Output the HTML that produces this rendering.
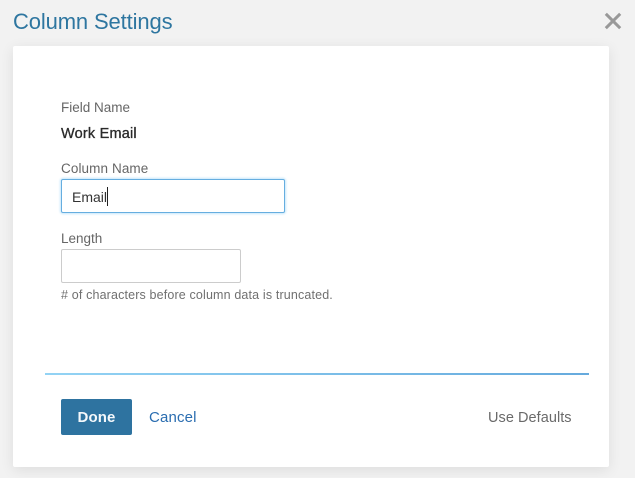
<!DOCTYPE html>
<html>
<head>
<meta charset="utf-8">
<style>
html,body{margin:0;padding:0;}
body{width:635px;height:478px;position:relative;overflow:hidden;background:#f2f2f2;font-family:"Liberation Sans",sans-serif;}
.t{position:absolute;white-space:nowrap;line-height:20px;}
.card{position:absolute;left:13px;top:46px;width:596px;height:421px;background:#fff;border-radius:2px;box-shadow:0 3px 14px rgba(0,0,0,.09);}
.inp{position:absolute;box-sizing:border-box;background:#fff;border-radius:2px;}
</style>
</head>
<body>
<div class="t" style="left:13px;top:12px;font-size:22px;color:#2e76a0;letter-spacing:-.13px;">Column Settings</div>
<svg style="position:absolute;left:604px;top:12px" width="18" height="18" viewBox="0 0 18 18"><path d="M1.8 1.8L16.2 16.2M16.2 1.8L1.8 16.2" stroke="#999" stroke-width="3" fill="none"/></svg>
<div class="card"></div>
<div class="t" style="left:61px;top:98px;font-size:13.5px;color:#666;">Field Name</div>
<div class="t" style="left:61px;top:124px;font-size:14.5px;color:#2a2a2a;letter-spacing:.2px;-webkit-text-stroke:.3px #2a2a2a;">Work Email</div>
<div class="t" style="left:61px;top:159px;font-size:13.5px;color:#666;letter-spacing:.1px;">Column Name</div>
<div class="inp" style="left:61px;top:179px;width:224px;height:34px;border:1px solid #66aee0;box-shadow:0 0 2px 1px #c4e6fa;"></div>
<div class="t" style="left:72px;top:187px;font-size:14px;color:#333;">Email</div>
<div style="position:absolute;left:107px;top:187px;width:1px;height:19px;background:#222;"></div>
<div class="t" style="left:61px;top:229px;font-size:13.5px;color:#666;">Length</div>
<div class="inp" style="left:61px;top:249px;width:180px;height:34px;border:1px solid #ccc;"></div>
<div class="t" style="left:61px;top:285px;font-size:12.5px;color:#707070;letter-spacing:.15px;"># of characters before column data is truncated.</div>
<div style="position:absolute;left:45px;top:373px;width:544px;height:2px;background:linear-gradient(90deg,#93d3f4,#66aadd);"></div>
<div style="position:absolute;left:61px;top:399px;width:71px;height:36px;background:#2e73a0;border-radius:2px;"></div>
<div class="t" style="left:61px;width:71px;text-align:center;top:408px;font-size:15px;font-weight:bold;color:#f4f8fb;letter-spacing:.1px;">Done</div>
<div class="t" style="left:149px;top:408px;font-size:15px;color:#2a6db0;letter-spacing:.15px;">Cancel</div>
<div class="t" style="left:488px;top:408px;font-size:14.5px;color:#6a6a6a;letter-spacing:.05px;">Use Defaults</div>
</body>
</html>
